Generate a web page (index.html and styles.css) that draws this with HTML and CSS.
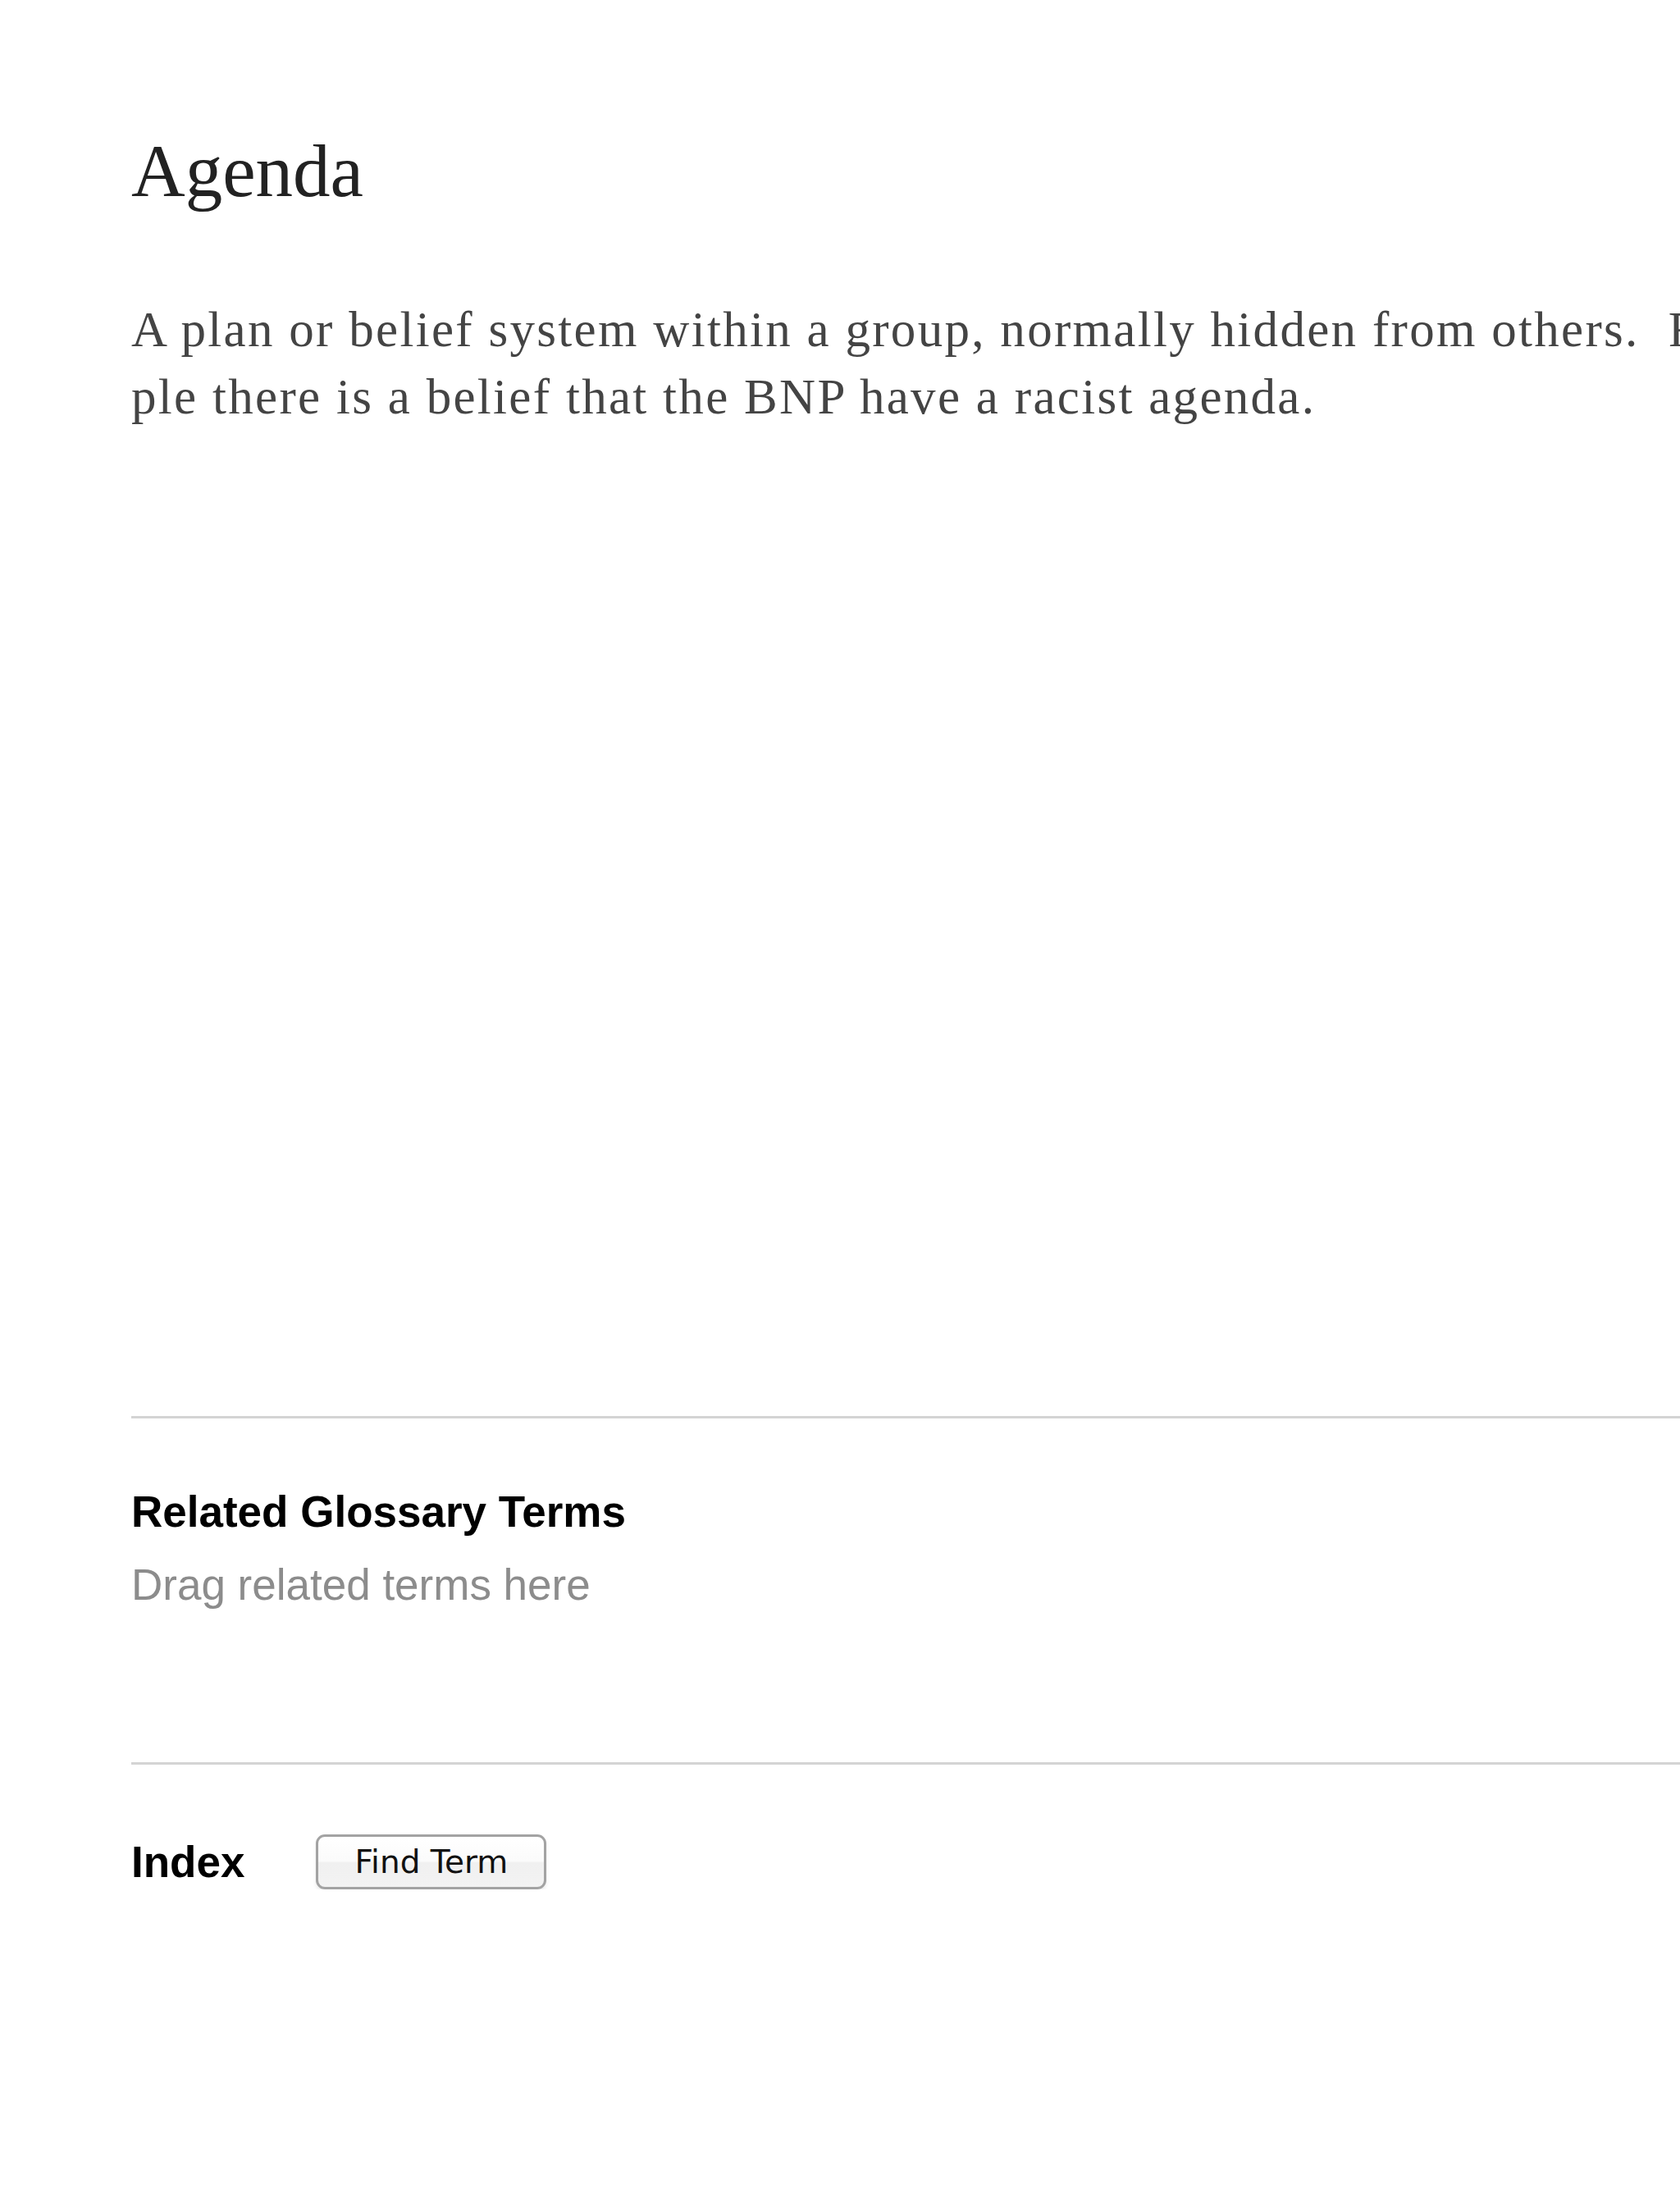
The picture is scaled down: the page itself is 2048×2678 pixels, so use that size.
FILE: index.html
```html
<!DOCTYPE html>
<html>
<head>
  <title>Agenda</title>
  <link rel="stylesheet" href="styles.css">
</head>
<body>
  <div class="entry">
    <h1 class="term">Agenda</h1>

    <p class="definition">A plan or belief system within a group, normally hidden from others.&nbsp; For exam-<br>ple there is a belief that the BNP have a racist agenda.</p>

    <div class="section related">
      <h2>Related Glossary Terms</h2>
      <div class="placeholder">Drag related terms here</div>
    </div>

    <div class="section index-row">
      <h2>Index</h2>
      <button type="button" class="find-btn">Find Term</button>
    </div>
  </div>
</body>
</html>
```

FILE: styles.css
```css
html, body {
  overflow: hidden;
}

body {
  margin: 0;
  background: #fff;
  font-family: "Liberation Sans", Arial, sans-serif;
}

.entry {
  padding: 159px 0 0 160px;
}

.term {
  margin: 0;
  font-family: "Liberation Serif", "Times New Roman", serif;
  font-size: 91px;
  font-weight: normal;
  line-height: 100px;
  color: #222;
}

.definition {
  margin: 102px 0 0 0;
  font-family: "Liberation Serif", "Times New Roman", serif;
  font-size: 61px;
  letter-spacing: 2.3px;
  line-height: 82px;
  color: #444;
  white-space: nowrap;
  height: 1365px;
}

.section {
  border-top: 3px solid #d4d4d4;
}

.section h2 {
  margin: 0;
  font-size: 53px;
  font-weight: bold;
  line-height: 60px;
  color: #000;
}

.related {
  padding-top: 84px;
  height: 422px;
  box-sizing: border-box;
}

.related .placeholder {
  margin-top: 29px;
  font-size: 53px;
  line-height: 60px;
  color: #8c8c8c;
}

.index-row {
  display: flex;
  align-items: center;
  gap: 87px;
  padding-top: 85px;
}

.find-btn {
  width: 281px;
  height: 67px;
  padding: 0;
  border: 3px solid #a3a3a3;
  border-radius: 11px;
  background: linear-gradient(#ffffff 0%, #fbfbfb 48%, #f0f0f0 52%, #f3f3f3 100%);
  box-shadow: 0 3px 4px rgba(0, 0, 0, 0.08);
  font-family: "DejaVu Sans", Verdana, sans-serif;
  font-size: 39px;
  color: #111;
  cursor: pointer;
}
```
